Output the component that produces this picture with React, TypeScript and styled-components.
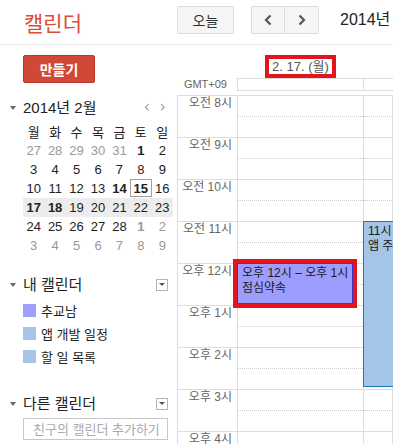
import React from 'react';
import styled, { createGlobalStyle } from 'styled-components';

const GlobalStyle = createGlobalStyle`
  html, body {
    margin: 0;
    padding: 0;
    background: #fff;
  }
  body {
    font-family: "Liberation Sans", Arial, "Noto Sans CJK KR", sans-serif;
    color: #222;
  }
  * {
    box-sizing: border-box;
  }
`;

const Page = styled.div`
  width: 393px;
  height: 444px;
  overflow: hidden;
`;

const Header = styled.header`
  display: flex;
  align-items: flex-start;
  height: 45px;
  border-bottom: 1px solid #e5e5e5;
  overflow: hidden;
`;

const Logo = styled.div`
  width: 177px;
  flex-shrink: 0;
  padding: 10px 0 0 24px;
  font-size: 21px;
  line-height: 28px;
  color: #dd4b39;
`;

const TodayButton = styled.button`
  flex-shrink: 0;
  margin-top: 6px;
  width: 57px;
  height: 28px;
  border: 1px solid #dcdcdc;
  border-radius: 2px;
  background: #f5f5f5;
  color: #333;
  font-family: inherit;
  font-size: 14px;
  white-space: nowrap;
  padding: 0;
`;

const NavGroup = styled.div`
  flex-shrink: 0;
  display: flex;
  margin: 6px 0 0 17px;
`;

const NavButton = styled.button<{ $side: 'left' | 'right' }>`
  width: 34px;
  height: 28px;
  padding: 0;
  display: flex;
  align-items: center;
  justify-content: center;
  background: #f5f5f5;
  border: 1px solid #dcdcdc;
  border-left-width: ${p => (p.$side === 'right' ? '0' : '1px')};
  border-radius: ${p => (p.$side === 'left' ? '2px 0 0 2px' : '0 2px 2px 0')};
`;

const RangeTitle = styled.div`
  flex-shrink: 0;
  margin: 6px 0 0 21px;
  font-size: 16px;
  line-height: 28px;
  white-space: nowrap;
  color: #222;
`;

const Body = styled.div`
  display: flex;
`;

const Sidebar = styled.aside`
  width: 177px;
  flex-shrink: 0;
  padding: 10px 9px 0 23px;
`;

const CreateButton = styled.button`
  width: 72px;
  height: 28px;
  padding: 0;
  background: #d14836;
  border: 1px solid #b9382a;
  border-radius: 2px;
  color: #fff;
  font-family: inherit;
  font-size: 14px;
  font-weight: bold;
`;

const Section = styled.div<{ $gap: number }>`
  margin-top: ${p => p.$gap}px;
`;

const SectionHeader = styled.div`
  display: flex;
  align-items: center;
  height: 17px;
  margin-left: -15px;
`;

const Caret = styled.span`
  width: 15px;
  flex-shrink: 0;
  display: flex;
  padding-left: 2px;
  &::before {
    content: '';
    border-left: 3.5px solid transparent;
    border-right: 3.5px solid transparent;
    border-top: 4px solid #666;
  }
`;

const SectionTitle = styled.span`
  font-size: 15px;
  line-height: 17px;
  color: #222;
  white-space: nowrap;
`;

const MiniNav = styled.div`
  margin-left: auto;
  display: flex;
  gap: 11px;
  padding-right: 2px;
`;

const MenuBox = styled.span`
  margin-left: auto;
  width: 12px;
  height: 12px;
  border: 1px solid #b5b5b5;
  display: flex;
  justify-content: center;
  padding-top: 3px;
  &::before {
    content: '';
    border-left: 3px solid transparent;
    border-right: 3px solid transparent;
    border-top: 3px solid #555;
    height: 0;
  }
`;

const MonthGrid = styled.div`
  margin-top: 6px;
  width: 150px;
`;

const Week = styled.div<{ $active?: boolean }>`
  display: grid;
  grid-template-columns: repeat(7, 1fr);
  height: 19px;
  background: ${p => (p.$active ? '#ececec' : 'transparent')};
`;

const DayCell = styled.div<{ $muted?: boolean; $bold?: boolean; $today?: boolean }>`
  display: flex;
  align-items: center;
  justify-content: center;
  font-size: 13px;
  color: ${p => (p.$muted ? '#999' : '#222')};
  font-weight: ${p => (p.$bold ? 'bold' : 'normal')};
  border: 1px solid ${p => (p.$today ? '#a0a0a0' : 'transparent')};
  height: ${p => (p.$today ? '18px' : '19px')};
`;

const CalList = styled.div`
  margin-top: 6px;
`;

const CalItem = styled.div`
  display: flex;
  align-items: center;
  height: 23px;
  gap: 5px;
  font-size: 13px;
  color: #222;
`;

const Swatch = styled.span<{ $color: string }>`
  width: 13px;
  height: 13px;
  background: ${p => p.$color};
`;

const AddInput = styled.input`
  margin-top: 6px;
  width: 145px;
  height: 22px;
  border: 1px solid #c8c8c8;
  padding: 0 0 0 9px;
  font-family: inherit;
  font-size: 13px;
  &::placeholder {
    color: #aaa;
  }
`;

const Main = styled.main`
  flex: 1;
  overflow: hidden;
`;

const DayHeaderRow = styled.div`
  display: flex;
  align-items: flex-end;
  height: 33px;
`;

const HeaderSpacer = styled.div`
  width: 60px;
  flex-shrink: 0;
`;

const DayHead = styled.div`
  width: 127px;
  flex-shrink: 0;
  display: flex;
  justify-content: center;
`;

const DateLabel = styled.span`
  display: inline-block;
  height: 23px;
  padding: 0 3px;
  border: 4px solid #e3141b;
  font-size: 13px;
  line-height: 15px;
  color: #555;
  white-space: nowrap;
`;

const AllDayRow = styled.div`
  display: flex;
  height: 13px;
`;

const Gmt = styled.div`
  width: 60px;
  flex-shrink: 0;
  padding-right: 10px;
  text-align: right;
  font-size: 11px;
  line-height: 13px;
  color: #666;
`;

const AllDayBox = styled.div`
  flex: 1;
  display: grid;
  grid-template-columns: 126px 1fr;
  border: 1px solid #ddd;
  border-right: none;
  & > div:first-child {
    border-right: 1px solid #ddd;
  }
`;

const Grid = styled.div`
  display: flex;
  margin-top: 4px;
  border-top: 1px solid #ddd;
  border-left: 1px solid #ddd;
`;

const TimeColumn = styled.div`
  width: 60px;
  flex-shrink: 0;
  border-right: 1px solid #ddd;
`;

const TimeLabel = styled.div`
  height: 42px;
  border-bottom: 1px solid #ddd;
  padding-right: 5px;
  text-align: right;
  font-size: 12px;
  line-height: 15px;
  color: #666;
  white-space: nowrap;
`;

const DayColumn = styled.div<{ $width?: number }>`
  position: relative;
  flex: ${p => (p.$width ? `0 0 ${p.$width}px` : '1')};
  border-right: 1px solid #ddd;
`;

const HourSlot = styled.div`
  position: relative;
  height: 42px;
  border-bottom: 1px solid #ddd;
  &::before {
    content: '';
    position: absolute;
    left: 0;
    right: 0;
    top: 20px;
    border-top: 1px dotted #ccc;
  }
`;

const EventBox = styled.div<{ $bg: string; $border: string; $marked?: boolean }>`
  position: absolute;
  left: -1px;
  background: ${p => p.$bg};
  border: 1px solid ${p => p.$border};
  padding: 2px 0 0 4px;
  font-size: 12px;
  line-height: 15px;
  color: #1a1a1a;
  white-space: nowrap;
  overflow: hidden;
  outline: ${p => (p.$marked ? '4px solid #e3141b' : 'none')};
`;

const Chevron = ({ dir, size = 1, color = '#555' }: { dir: 'left' | 'right'; size?: number; color?: string }) => (
  <svg width={8 * size} height={12 * size} viewBox="0 0 8 12">
    <polyline
      points={dir === 'left' ? '6.5,1.5 2,6 6.5,10.5' : '1.5,1.5 6,6 1.5,10.5'}
      fill="none"
      stroke={color}
      strokeWidth={size < 1 ? 1.6 : 2.2}
    />
  </svg>
);

type Day = { d: number; muted?: boolean; bold?: boolean; today?: boolean };

const weeks: { days: Day[]; active?: boolean }[] = [
  { days: [{ d: 27, muted: true }, { d: 28, muted: true }, { d: 29, muted: true }, { d: 30, muted: true }, { d: 31, muted: true }, { d: 1, bold: true }, { d: 2 }] },
  { days: [3, 4, 5, 6, 7, 8, 9].map(d => ({ d })) },
  { days: [{ d: 10 }, { d: 11 }, { d: 12 }, { d: 13 }, { d: 14, bold: true }, { d: 15, bold: true, today: true }, { d: 16 }] },
  { days: [{ d: 17, bold: true }, { d: 18, bold: true }, { d: 19 }, { d: 20 }, { d: 21 }, { d: 22 }, { d: 23 }], active: true },
  { days: [{ d: 24 }, { d: 25 }, { d: 26 }, { d: 27 }, { d: 28 }, { d: 1, muted: true, bold: true }, { d: 2, muted: true }] },
  { days: [3, 4, 5, 6, 7, 8, 9].map(d => ({ d, muted: true })) },
];

const weekdays = ['월', '화', '수', '목', '금', '토', '일'];

const hours = ['오전 8시', '오전 9시', '오전 10시', '오전 11시', '오후 12시', '오후 1시', '오후 2시', '오후 3시', '오후 4시'];

const calendars = [
  { name: '추교남', color: '#9fa0fe' },
  { name: '앱 개발 일정', color: '#a4c4e8' },
  { name: '할 일 목록', color: '#a4c4e8' },
];

const App: React.FC = () => {
  return (
    <>
      <GlobalStyle />
      <Page>
        <Header>
          <Logo>캘린더</Logo>
          <TodayButton>오늘</TodayButton>
          <NavGroup>
            <NavButton $side="left"><Chevron dir="left" /></NavButton>
            <NavButton $side="right"><Chevron dir="right" /></NavButton>
          </NavGroup>
          <RangeTitle>2014년 2월 17일</RangeTitle>
        </Header>
        <Body>
          <Sidebar>
            <CreateButton>만들기</CreateButton>

            <Section $gap={16}>
              <SectionHeader>
                <Caret />
                <SectionTitle>2014년 2월</SectionTitle>
                <MiniNav>
                  <Chevron dir="left" size={0.7} color="#999" />
                  <Chevron dir="right" size={0.7} color="#999" />
                </MiniNav>
              </SectionHeader>
              <MonthGrid>
                <Week>
                  {weekdays.map(w => (
                    <DayCell key={w}>{w}</DayCell>
                  ))}
                </Week>
                {weeks.map((week, i) => (
                  <Week key={i} $active={week.active}>
                    {week.days.map((day, j) => (
                      <DayCell key={j} $muted={day.muted} $bold={day.bold} $today={day.today}>
                        {day.d}
                      </DayCell>
                    ))}
                  </Week>
                ))}
              </MonthGrid>
            </Section>

            <Section $gap={21}>
              <SectionHeader>
                <Caret />
                <SectionTitle>내 캘린더</SectionTitle>
                <MenuBox />
              </SectionHeader>
              <CalList>
                {calendars.map(c => (
                  <CalItem key={c.name}>
                    <Swatch $color={c.color} />
                    {c.name}
                  </CalItem>
                ))}
              </CalList>
            </Section>

            <Section $gap={27}>
              <SectionHeader>
                <Caret />
                <SectionTitle>다른 캘린더</SectionTitle>
                <MenuBox />
              </SectionHeader>
              <AddInput placeholder="친구의 캘린더 추가하기" />
            </Section>
          </Sidebar>

          <Main>
            <DayHeaderRow>
              <HeaderSpacer />
              <DayHead>
                <DateLabel>2. 17. (월)</DateLabel>
              </DayHead>
            </DayHeaderRow>
            <AllDayRow>
              <Gmt>GMT+09</Gmt>
              <AllDayBox>
                <div />
                <div />
              </AllDayBox>
            </AllDayRow>
            <Grid>
              <TimeColumn>
                {hours.map(h => (
                  <TimeLabel key={h}>{h}</TimeLabel>
                ))}
              </TimeColumn>
              <DayColumn $width={126}>
                {hours.map(h => (
                  <HourSlot key={h} />
                ))}
                <EventBox $bg="#9c9dfd" $border="#3535c8" $marked style={{ top: 167, width: 116, height: 41 }}>
                  오후 12시 – 오후 1시
                  <br />
                  점심약속
                </EventBox>
              </DayColumn>
              <DayColumn>
                {hours.map(h => (
                  <HourSlot key={h} />
                ))}
                <EventBox $bg="#a4c4e8" $border="#1a7ab8" style={{ top: 125, width: 60, height: 166 }}>
                  11시
                  <br />
                  앱 주간 회의
                </EventBox>
              </DayColumn>
            </Grid>
          </Main>
        </Body>
      </Page>
    </>
  );
};

export default App;
